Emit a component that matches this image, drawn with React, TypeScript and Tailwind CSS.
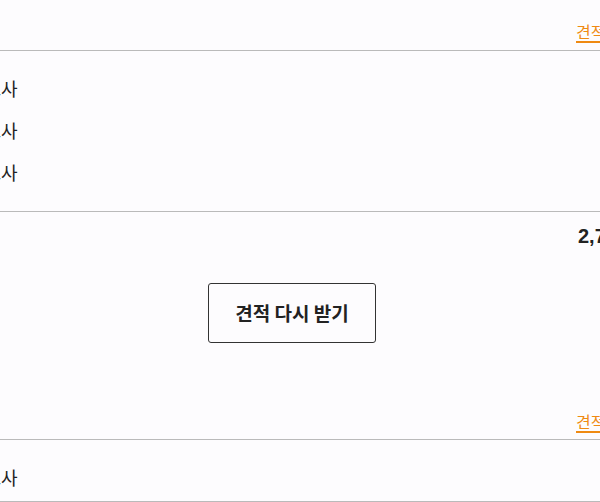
const rows = ["제조사", "제조사", "제조사"];

function QuoteLink() {
  return (
    <div className="flex">
      <span className="ml-[576px] whitespace-nowrap text-[16px] leading-6 text-[#ef8a12] underline decoration-[1.5px] underline-offset-[3px]">
        견적서 보기
      </span>
    </div>
  );
}

function Label({ text }: { text: string }) {
  return (
    <div className="flex h-[42px] items-center">
      <span className="-ml-[32px] whitespace-nowrap text-[18px] text-[#222]">{text}</span>
    </div>
  );
}

export default function App() {
  return (
    <div
      className="h-[502px] w-[600px] overflow-hidden bg-[#fdfcfe]"
      style={{ fontFamily: '"Noto Sans CJK KR", "Noto Sans", sans-serif' }}
    >
      <div className="border-b border-[#bababa] pb-[7px] pt-[19px]">
        <QuoteLink />
      </div>
      <div className="border-b border-[#bababa] pb-[18px] pt-4">
        {rows.map((r, i) => (
          <Label key={i} text={r} />
        ))}
      </div>
      <div className="border-b border-[#bababa] pb-[6px] pt-[10px]">
        <div className="flex">
          <span
            className="ml-[578px] whitespace-nowrap text-[20px] font-bold leading-7 text-[#222]"
            style={{ fontFamily: '"Liberation Sans", "Noto Sans CJK KR", sans-serif' }}
          >
            2,750,000원
          </span>
        </div>
        <div className="mt-[33px] flex">
          <button className="ml-[208px] flex h-[60px] w-[168px] items-center justify-center rounded-[3px] border border-[#333] text-[19px] font-bold text-[#222]">
            견적 다시 받기
          </button>
        </div>
        <div className="mt-[66px]">
          <QuoteLink />
        </div>
      </div>
      <div className="border-b border-[#bababa] pb-[3px] pt-4">
        <Label text="제조사" />
      </div>
    </div>
  );
}
